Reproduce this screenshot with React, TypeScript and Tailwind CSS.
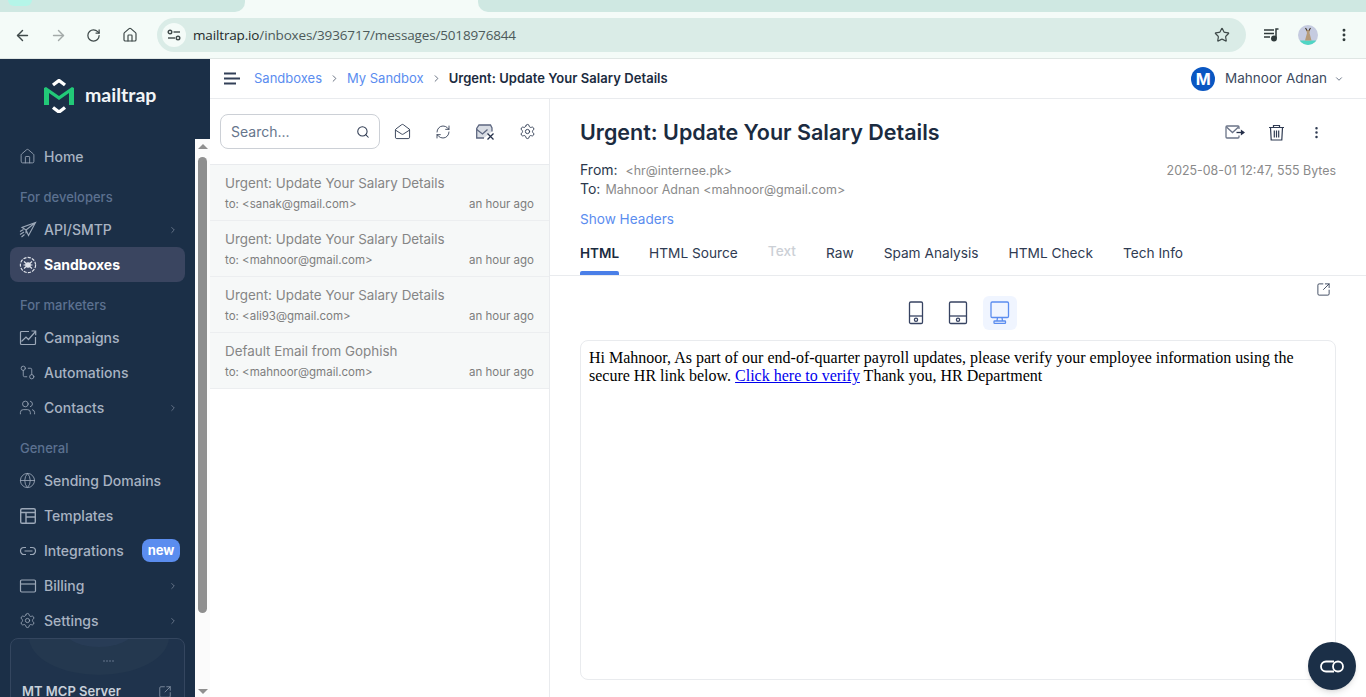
import React from 'react';
import {
  ArrowLeft, ArrowRight, RotateCw, Home, Star, EllipsisVertical, ChevronRight, ChevronDown,
  Users, Globe, Settings, SquareArrowOutUpRight, MailOpen, RefreshCw, Search, GitCompare,
} from 'lucide-react';

const PlaneIcon = () => (
  <svg width="18" height="18" viewBox="0 0 18 18" fill="none" stroke="currentColor" strokeWidth="1.1">
    <path d="M16.500 1.500 3 6.500l4 2.500 2.500 5.500zM16.500 1.500 7 9M7 9v3.500" />
    <path d="M1 10.500 4.500 8.500M1 13.500 5 11M2.500 16l3-2.500" />
  </svg>
);

const CampaignIcon = () => (
  <svg width="18" height="18" viewBox="0 0 18 18" fill="none" stroke="currentColor" strokeWidth="1.2">
    <path d="M10 2.500H2.500a1 1 0 0 0-1 1v11a1 1 0 0 0 1 1h13a1 1 0 0 0 1-1V8" />
    <path d="M2.500 12.500 7 8l2.500 2.500L16.500 2.500M12.500 2h4.200v4.200" />
  </svg>
);

const SandboxIcon = () => (
  <svg width="18" height="18" viewBox="0 0 18 18" fill="none" stroke="currentColor" strokeWidth="1.2">
    <circle cx="9" cy="9" r="7.600" strokeDasharray="3.200 1.200" />
    <path d="M5 5.500 13 12.500M13 5.500 5 12.500M4.500 9h9" />
    <circle cx="9" cy="9" r="2.200" fill="currentColor" />
  </svg>
);

const TemplateIcon = () => (
  <svg width="18" height="18" viewBox="0 0 18 18" fill="none" stroke="currentColor" strokeWidth="1.400">
    <rect x="1.700" y="1.700" width="14.600" height="14.600" rx="1.400" />
    <path d="M1.700 5.500h14.600M7 5.500v10.800M7 10h9.300" />
  </svg>
);

const BillingIcon = () => (
  <svg width="18" height="18" viewBox="0 0 18 18" fill="none" stroke="currentColor" strokeWidth="1.200">
    <rect x="1.500" y="3" width="15" height="12" rx="1.200" />
    <path d="M1.500 7h15" />
  </svg>
);

const LinkIcon = () => (
  <svg width="18" height="18" viewBox="0 0 18 18" fill="none" stroke="currentColor" strokeWidth="1.200">
    <path d="M7 5.500H5a3.500 3.500 0 0 0 0 7h2M11 5.500h2a3.500 3.500 0 0 1 0 7h-2M5.500 9h8" />
  </svg>
);

const TrashIcon = () => (
  <svg width="17" height="17" viewBox="0 0 17 17" fill="none" stroke="#2f3b52" strokeWidth="1.200">
    <path d="M1 3.500h15M5.500 3.500V1.500h6v2M2.500 3.500l.7 12.500h10.600l.7-12.500M6.300 6.500v7M8.500 6.500v7M10.700 6.500v7" />
  </svg>
);

const MailtrapLogo = () => (
  <svg width="34" height="34" viewBox="0 0 34 34" fill="none">
    <path d="M11 6 17 1.500 23 6" stroke="#fff" strokeWidth="3.400" />
    <path d="M11 28.500 17 33 23 28.500" stroke="#fff" strokeWidth="3.400" />
    <path d="M2 26V9l2-1 13 9 13-9 2 1v17h-5V14l-10 7-10-7v12z" fill="#22c978" />
  </svg>
);

const Avatar = () => (
  <svg width="20" height="20" viewBox="0 0 20 20">
    <clipPath id="av"><circle cx="10" cy="10" r="10" /></clipPath>
    <g clipPath="url(#av)">
      <rect width="20" height="20" fill="#c5cbe0" />
      <rect y="15.500" width="20" height="4.500" fill="#4fd6c4" />
      <path d="M8 5h4l-.5 3 2 7.500H7L9 8z" fill="#b59a78" />
      <path d="M7.500 3 9 5.500M12.500 3 11 5.500" stroke="#3d3428" strokeWidth="1.100" />
    </g>
  </svg>
);

const PhoneIcon = ({ wide }: { wide?: boolean }) => (
  <svg width={wide ? 20 : 16} height="24" viewBox={wide ? '0 0 20 24' : '0 0 16 24'} fill="none" stroke="#374362" strokeWidth="1.300">
    <rect x="1.500" y="1" width={wide ? 17 : 13} height="21.500" rx="1.300" />
    <path d={wide ? 'M1.500 15h17' : 'M1.500 15h13'} />
    <circle cx={wide ? 10 : 8} cy="18.800" r="1.600" />
  </svg>
);

const DesktopIcon = () => (
  <svg width="20" height="24" viewBox="0 0 20 24" fill="none" stroke="#5b8def" strokeWidth="1.300">
    <rect x="1" y="1" width="17.500" height="15.500" rx="1.200" />
    <path d="M7.500 16.500 7 20M12 16.500l.5 3.500" />
    <rect x="4" y="20" width="11.500" height="2.400" rx="0.600" />
  </svg>
);

const ArchiveXIcon = () => (
  <svg width="20" height="18" viewBox="0 0 20 18" fill="none" stroke="#5d6780" strokeWidth="1.300">
    <path d="M9 15H1.700V5.500L4 2h11.500l1.500 3v3.500" fill="#b4bbca" fillOpacity="0.5" />
    <path d="M1.700 6.500 7.500 11 12.500 6.500" />
    <path d="M12.500 10.500l6 6M18.500 10.500l-6 6" stroke="#25304a" />
  </svg>
);

const ForwardMailIcon = () => (
  <svg width="20" height="14" viewBox="0 0 20 14" fill="none" stroke="#6b7488" strokeWidth="1.300">
    <path d="M14 10.500V12a1 1 0 0 1-1 1H2a1 1 0 0 1-1-1V2a1 1 0 0 1 1-1h11a1 1 0 0 1 1 1v2" />
    <path d="M1.500 2 7.500 7.500 13.500 2" />
    <path d="M11.500 7.500H18.500" stroke="#25304a" />
    <path d="M16.500 5.800 19 7.500 16.500 9.200z" fill="#25304a" stroke="#25304a" />
  </svg>
);

const NavRow = ({ icon, label, arrow, active, badge }: { icon: React.ReactNode; label: string; arrow?: boolean; active?: boolean; badge?: boolean }) => (
  <div className={`flex items-center h-[35px] mx-[10px] pl-[9px] pr-[8px] rounded-lg text-[14px] ${active ? 'bg-[#3a4560] text-white font-bold' : 'text-[#a8b3c2] font-medium'}`}>
    <span className={`w-[25px] flex items-center ${active ? 'text-[#dfe3ea]' : 'text-[#9ca8b8]'}`}>{icon}</span>
    <span className="flex-1 whitespace-nowrap">{label}</span>
    {arrow && <ChevronRight size={10} strokeWidth={1.500} className="text-[#8d99aa] -mr-[1px]" />}
    {badge && <span className="bg-[#5b8def] text-white text-[13px] font-bold h-[23px] w-[38px] -mr-[3px] rounded-lg flex items-center justify-center">new</span>}
  </div>
);

const NavLabel = ({ children }: { children: React.ReactNode }) => (
  <div className="h-[38px] flex items-center pl-[20px] pt-[10px] text-[13px] text-[#5c7190] font-medium">{children}</div>
);

const messages = [
  { subject: 'Urgent: Update Your Salary Details', to: 'to: <sanak@gmail.com>' },
  { subject: 'Urgent: Update Your Salary Details', to: 'to: <mahnoor@gmail.com>' },
  { subject: 'Urgent: Update Your Salary Details', to: 'to: <ali93@gmail.com>' },
  { subject: 'Default Email from Gophish', to: 'to: <mahnoor@gmail.com>' },
];

const tabs = ['HTML', 'HTML Source', 'Text', 'Raw', 'Spam Analysis', 'HTML Check', 'Tech Info'];

const App: React.FC = () => {
  return (
    <div className="h-[697px] w-[1366px] flex flex-col overflow-hidden bg-white relative font-['Inter',sans-serif]">
      {/* Browser chrome */}
      <div className="h-[59px] shrink-0 bg-[#f4fbf8] border-b border-[#dfe6e4]">
        <div className="h-[12px] flex bg-[#f4fbf8]">
          <div className="w-[245px] bg-[#cfe8e2] rounded-br-[10px] relative overflow-hidden pl-[8px]">
            <div className="w-[24px] h-[6px] bg-[#b5f5e8] rounded-b-[6px]" />
          </div>
          <div className="w-[233px]" />
          <div className="flex-1 bg-[#cfe8e2] rounded-bl-[10px]" />
        </div>
        <div className="h-[46px] flex items-center rounded-t-[10px] bg-[#f4fbf8] pl-[14px] pr-[13px]">
          <ArrowLeft size={17} strokeWidth={2} className="text-[#3f4a4a]" />
          <ArrowRight size={17} strokeWidth={2} className="text-[#a3aaa9] ml-[19px]" />
          <RotateCw size={15} strokeWidth={2} className="text-[#3f4a4a] ml-[19px]" />
          <Home size={16} strokeWidth={1.800} className="text-[#3f4a4a] ml-[21px]" />
          <div className="ml-[19px] w-[1089px] h-[34px] rounded-full bg-[#daece7] flex items-center pl-[5px] pr-[16px]">
            <div className="w-[24px] h-[24px] rounded-full bg-[#f4fbf8] flex items-center justify-center">
              <svg width="14" height="12" viewBox="0 0 14 12" fill="none" stroke="#3f4a4a" strokeWidth="1.400">
                <circle cx="3" cy="3" r="1.800" /><path d="M6.500 3H13" />
                <circle cx="11" cy="9" r="1.800" /><path d="M1 9h7" />
              </svg>
            </div>
            <span className="ml-[7px] text-[13.500px] text-[#1f2a2a] font-['Open_Sans',sans-serif] tracking-[-0.15px]">
              mailtrap.io<span className="text-[#4d5a5a]">/inboxes/3936717/messages/5018976844</span>
            </span>
            <Star size={16} strokeWidth={1.800} className="ml-auto text-[#3f4a4a]" />
          </div>
          <svg width="16" height="14" viewBox="0 0 16 14" fill="none" stroke="#2f3a3a" strokeWidth="1.500" className="ml-[18px]">
            <path d="M0 2h10M0 5.500h10M0 9h6M14.500 1h-2.500v9" />
            <circle cx="10" cy="10.500" r="2.200" fill="#2f3a3a" />
          </svg>
          <span className="ml-[18px]"><Avatar /></span>
          <EllipsisVertical size={16} strokeWidth={2.400} className="text-[#2f3a3a] ml-[18px]" />
        </div>
      </div>

      <div className="flex-1 min-h-0 flex">
        {/* Sidebar */}
        <aside className="w-[210px] shrink-0 bg-[#1b2f47] flex flex-col">
          <div className="h-[80px] shrink-0 flex items-center pl-[42px] pb-[6px]">
            <MailtrapLogo />
            <span className="ml-[9px] text-[19.500px] leading-none font-bold text-[#f2f5f7] font-['Lato',sans-serif] -mt-[2px]">mailtrap</span>
          </div>
          <div className="flex-1 min-h-0 flex">
            <nav className="w-[195px] shrink-0 overflow-hidden">
              <NavRow icon={<Home size={17} strokeWidth={1.200} />} label="Home" />
              <NavLabel>For developers</NavLabel>
              <NavRow icon={<PlaneIcon />} label="API/SMTP" arrow />
              <NavRow icon={<SandboxIcon />} label="Sandboxes" active />
              <NavLabel>For marketers</NavLabel>
              <NavRow icon={<CampaignIcon />} label="Campaigns" />
              <NavRow icon={<GitCompare size={17} strokeWidth={1.200} />} label="Automations" />
              <NavRow icon={<Users size={17} strokeWidth={1.200} />} label="Contacts" arrow />
              <NavLabel>General</NavLabel>
              <NavRow icon={<Globe size={17} strokeWidth={1.200} />} label="Sending Domains" />
              <NavRow icon={<TemplateIcon />} label="Templates" />
              <NavRow icon={<LinkIcon />} label="Integrations" badge />
              <NavRow icon={<BillingIcon />} label="Billing" arrow />
              <NavRow icon={<Settings size={17} strokeWidth={1.200} />} label="Settings" arrow />
              <div className="mx-[10px] h-[80px] rounded-t-lg border border-[#34465f] bg-[#1f334c] overflow-hidden relative">
                <svg width="175" height="40" viewBox="0 0 175 40" fill="none" className="absolute top-0 left-0">
                  <ellipse cx="88" cy="-2" rx="70" ry="38" fill="#24384f" />
                  <ellipse cx="88" cy="-8" rx="34" ry="16" fill="#283c56" />
                  <path d="M92 22h12" stroke="#65758c" strokeDasharray="2 1" />
                </svg>
                <div className="absolute top-[43px] left-[11px] right-[12px] flex items-center justify-between text-[#c8d0da] text-[13px] font-semibold">
                  <span className="whitespace-nowrap">MT MCP Server</span>
                  <SquareArrowOutUpRight size={14} strokeWidth={1.200} className="text-[#9ca8b8]" />
                </div>
              </div>
            </nav>
            {/* Scrollbar */}
            <div className="w-[15px] shrink-0 bg-[#fbfbfb] flex flex-col items-center">
              <div className="mt-[5px] w-0 h-0 border-x-[5px] border-x-transparent border-b-[5px] border-b-[#8f8f8f]" />
              <div className="mt-[8px] w-[9px] h-[456px] bg-[#8f8f8f] rounded-full" />
              <div className="mt-auto mb-[3px] w-0 h-0 border-x-[5px] border-x-transparent border-t-[5px] border-t-[#8f8f8f]" />
            </div>
          </div>
        </aside>

        <div className="flex-1 min-w-0 flex flex-col">
          {/* Top bar */}
          <header className="h-[40px] shrink-0 border-b border-[#e9ebee] flex items-center pl-[14px] pr-[22px] text-[13px]">
            <svg width="17" height="13" viewBox="0 0 17 13" fill="none" stroke="#334058" strokeWidth="1.800">
              <path d="M0 1.500h12M0 6.500h16M0 11.500h12" />
            </svg>
            <span className="ml-[13px] text-[#5b8def]">Sandboxes</span>
            <ChevronRight size={11} strokeWidth={1.800} className="mx-[7px] text-[#4a5568]" />
            <span className="text-[#5b8def]">My Sandbox</span>
            <ChevronRight size={11} strokeWidth={1.800} className="mx-[7px] text-[#4a5568]" />
            <span className="font-semibold text-[#1b2b40] tracking-[0.05px]">Urgent: Update Your Salary Details</span>
            <div className="ml-auto flex items-center">
              <div className="w-[24px] h-[24px] rounded-full bg-[#0a57c2] text-white text-[16px] font-bold flex items-center justify-center">M</div>
              <span className="ml-[10px] text-[13.500px] text-[#3c4a60]">Mahnoor Adnan</span>
              <ChevronDown size={10} strokeWidth={1.800} className="ml-[7px] text-[#3c4a60]" />
            </div>
          </header>

          <div className="flex-1 min-h-0 flex">
            {/* Message list */}
            <section className="w-[340px] shrink-0 border-r border-[#e9ebee]">
              <div className="h-[66px] border-b border-[#e9ebee] flex items-center pl-[10px]">
                <div className="w-[160px] h-[35px] rounded-lg border border-[#ccd0d6] flex items-center pl-[10px] pr-[9px]">
                  <span className="text-[14px] text-[#66758c]">Search...</span>
                  <Search size={14} strokeWidth={1.800} className="ml-auto text-[#2f3b52]" />
                </div>
                <MailOpen size={17} strokeWidth={1.300} className="ml-[14px] text-[#2f3b52]" />
                <RefreshCw size={16} strokeWidth={1.300} className="ml-[24px] text-[#2f3b52]" />
                <span className="ml-[24px]"><ArchiveXIcon /></span>
                <Settings size={17} strokeWidth={1.300} className="ml-[24px] text-[#2f3b52]" />
              </div>
              {messages.map((m, i) => (
                <div key={i} className="h-[56px] bg-[#f6f8f8] border-b border-[#eceef0] pl-[15px] pr-[15px] pt-[8px]">
                  <div className="text-[13.400px] leading-[20px] text-[#858585]">{m.subject}</div>
                  <div className="flex justify-between text-[11.500px] leading-[20px] text-[#7d7d7d] mt-[1px]">
                    <span>{m.to}</span>
                    <span>an hour ago</span>
                  </div>
                </div>
              ))}
            </section>

            {/* Message detail */}
            <main className="flex-1 min-w-0 flex flex-col relative">
              <div className="px-[30px] pt-[18px] shrink-0">
                <div className="flex items-center justify-between h-[30px]">
                  <h1 className="text-[21.500px] font-semibold text-[#1b2b40] leading-[30px]">Urgent: Update Your Salary Details</h1>
                  <div className="flex items-center pr-[12px]">
                    <ForwardMailIcon />
                    <span className="ml-[23px]"><TrashIcon /></span>
                    <EllipsisVertical size={15} strokeWidth={2} className="ml-[24px] text-[#2f3b52]" />
                  </div>
                </div>
                <div className="mt-[13px] flex justify-between h-[19px] items-center text-[12.400px] text-[#8a8a8a]">
                  <span><span className="text-[14px] text-[#2b384c]">From:</span><span className="ml-[8px]">&lt;hr@internee.pk&gt;</span></span>
                  <span className="mt-[3px]">2025-08-01 12:47, 555 Bytes</span>
                </div>
                <div className="h-[19px] flex items-center text-[12.500px] text-[#8a8a8a]">
                  <span className="text-[14px] text-[#2b384c]">To:</span><span className="ml-[5px] mt-[3px]">Mahnoor Adnan &lt;mahnoor@gmail.com&gt;</span>
                </div>
                <div className="mt-[11px] h-[20px] flex items-center text-[13.600px] text-[#5b8def]">Show Headers</div>
              </div>
              <div className="mt-[13px] h-[34px] shrink-0 border-b border-[#e9ebee] flex pl-[30px] gap-[30px] text-[13.700px]">
                {tabs.map(t => (
                  <div key={t} className={`h-[33px] relative ${t === 'HTML' ? 'font-semibold text-[#1b2b40] text-[13.500px]' : t === 'Text' ? 'text-[#ccd0d6] font-medium' : 'text-[#2f3b52]'}`}>
                    <span className={`block ${t === 'Text' ? 'leading-[18px]' : 'leading-[20px] pt-[1px]'}`}>{t}</span>
                    {t === 'HTML' && <div className="absolute left-0 right-0 bottom-0 h-[4px] bg-[#4a7fe8] rounded-t-[2px]" />}
                  </div>
                ))}
              </div>
              <SquareArrowOutUpRight size={15} strokeWidth={1.400} className="absolute top-[183px] right-[35px] text-[#2f3b52]" />
              <div className="h-[64px] shrink-0 flex items-center justify-center pt-[16px] pb-[6px]">
                <div className="flex items-center ml-[9px]">
                  <PhoneIcon />
                  <span className="ml-[24px]"><PhoneIcon wide /></span>
                  <div className="ml-[15px] w-[34px] h-[34px] rounded-md bg-[#f0f5ff] flex items-center justify-center"><DesktopIcon /></div>
                </div>
              </div>
              <div className="mx-[30px] h-[340px] shrink-0 rounded-lg border border-[#e9ebee] pl-[8px] pr-[20px] pt-[8px] font-['Liberation_Serif',serif] text-[16px] leading-[18px] text-black">
                Hi Mahnoor, As part of our end-of-quarter payroll updates, please verify your employee information using the secure HR link below. <span className="text-[#0000ee] underline">Click here to verify</span> Thank you, HR Department
              </div>
            </main>
          </div>
        </div>
      </div>

      {/* Floating chat button */}
      <div className="absolute right-[10px] bottom-[7px] w-[48px] h-[48px] rounded-full bg-[#1b2f47] shadow-md flex items-center justify-center">
        <svg width="24" height="13" viewBox="0 0 24 13" fill="none" stroke="#fff" strokeWidth="1.800">
          <path d="M14 1.500H6a5 5 0 0 0 0 10h8" />
          <circle cx="18" cy="6.500" r="5" />
        </svg>
      </div>
    </div>
  );
};

export default App;
